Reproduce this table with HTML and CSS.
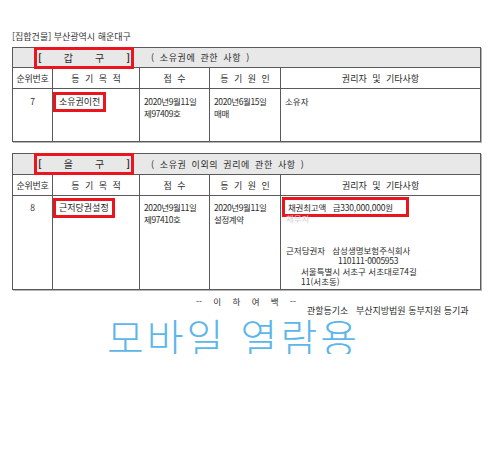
FILE: index.html
```html
<!DOCTYPE html>
<html lang="ko">
<head>
<meta charset="utf-8">
<title>등기부등본</title>
<link rel="stylesheet" href="styles.css">
</head>
<body>
<div class="page">
  <div class="title">[집합건물] 부산광역시 해운대구</div>

  <table class="reg">
    <colgroup><col class="c1"><col class="c2"><col class="c3"><col class="c4"><col class="c5"></colgroup>
    <tr class="sec">
      <td colspan="5">
        <div class="sec-inner">
          <span class="sec-label mark"><b>[</b><span>갑</span><span>구</span><b>]</b></span>
          <span class="sec-desc">( 소유권에 관한 사항 )</span>
        </div>
      </td>
    </tr>
    <tr class="hd">
      <th>순위번호</th><th>등 기 목 적</th><th>접 수</th><th>등 기 원 인</th><th>권리자 및 기타사항</th>
    </tr>
    <tr class="body b1">
      <td class="num">7</td>
      <td><span class="mark small">소유권이전</span></td>
      <td class="date">2020년9월11일<br>제97409호</td>
      <td class="date">2020년6월15일<br>매매</td>
      <td>소유자</td>
    </tr>
  </table>

  <table class="reg second">
    <colgroup><col class="c1"><col class="c2"><col class="c3"><col class="c4"><col class="c5"></colgroup>
    <tr class="sec">
      <td colspan="5">
        <div class="sec-inner">
          <span class="sec-label mark"><b>[</b><span>을</span><span>구</span><b>]</b></span>
          <span class="sec-desc">( 소유권 이외의 권리에 관한 사항 )</span>
        </div>
      </td>
    </tr>
    <tr class="hd">
      <th>순위번호</th><th>등 기 목 적</th><th>접 수</th><th>등 기 원 인</th><th>권리자 및 기타사항</th>
    </tr>
    <tr class="body b2">
      <td class="num">8</td>
      <td><span class="mark small">근저당권설정</span></td>
      <td class="date">2020년9월11일<br>제97410호</td>
      <td class="date">2020년9월11일<br>설정계약</td>
      <td class="rights">
        <div class="line"><span class="mark wide">채권최고액&nbsp;&nbsp;&nbsp;금330,000,000원</span></div>
        <div class="line faint">채무자</div>
        <div class="line"></div>
        <div class="line"></div>
        <div class="line">근저당권자&nbsp;&nbsp;&nbsp;삼성생명보험주식회사</div>
        <div class="line ind2">110111-0005953</div>
        <div class="line ind1">서울특별시 서초구 서초대로74길</div>
        <div class="line ind1">11(서초동)</div>
      </td>
    </tr>
  </table>

  <div class="end-mark"><span>--</span><span>이</span><span>하</span><span>여</span><span>백</span><span>--</span></div>
  <div class="office">관할등기소&nbsp;&nbsp;&nbsp;부산지방법원 동부지원 등기과</div>
  <div class="watermark">모바일 열람용</div>
</div>
</body>
</html>
```

FILE: styles.css
```css
html, body {
  margin: 0;
  padding: 0;
  background: #ffffff;
}

body {
  font-family: "Noto Sans CJK KR", "Noto Sans", sans-serif;
  color: #2b2b2b;
}

.page {
  padding: 31px 22px 0 12px;
}

.title {
  font-size: 9px;
  line-height: 12px;
  height: 16px;
  color: #333;
}

.reg {
  width: 468px;
  border-collapse: collapse;
  table-layout: fixed;
  border: 1px solid #4a4a4a;
  box-shadow: 1px 1px 0 #b5b5b5;
}

.reg.second {
  margin-top: 11px;
}

.c1 { width: 40px; }
.c2 { width: 87px; }
.c3 { width: 70px; }
.c4 { width: 71px; }
.c5 { width: 200px; }

.reg td, .reg th {
  border: 1px solid #5a5a5a;
  padding: 0;
}

.sec td {
  height: 19px;
  background: #e8e8e8;
}

.second .sec td {
  height: 20px;
}

.sec-inner {
  display: flex;
  align-items: center;
}

.sec-label {
  display: inline-flex;
  justify-content: space-between;
  align-items: center;
  width: 92px;
  height: 14px;
  margin-left: 25px;
  font-size: 10px;
  line-height: 14px;
}

.sec-label b {
  font-weight: 700;
}

.sec-label span {
  font-weight: 400;
}

.sec-desc {
  margin-left: 21px;
  font-size: 9px;
  letter-spacing: 0.6px;
  word-spacing: 2px;
}

.mark {
  outline: 3px solid #e9151f;
  outline-offset: 1px;
}

.hd th {
  height: 20px;
  font-weight: 400;
  font-size: 9px;
  text-align: center;
  word-spacing: 3px;
}

.hd th:first-child {
  word-spacing: 0;
  letter-spacing: -0.3px;
}

.body td {
  vertical-align: top;
  font-size: 8.5px;
  line-height: 12px;
  padding: 6px 4px 0 4px;
}

.b1 td {
  height: 46px;
}

.b2 td {
  height: 88px;
  padding-top: 5px;
}

.num {
  text-align: center;
}

.small {
  display: inline-block;
  padding: 0 2px;
  font-size: 9px;
  line-height: 12px;
  font-weight: 400;
  color: #1e1e1e;
}

.date {
  letter-spacing: -0.4px;
  font-size: 8.5px;
}

.b2 td.rights {
  padding-left: 5px;
}

.rights .line {
  height: 10.5px;
  line-height: 10.5px;
  white-space: nowrap;
}

.rights .line:first-child {
  height: 12px;
  line-height: 12px;
}

.wide {
  display: inline-block;
  padding: 0 12px 0 2px;
  letter-spacing: -0.2px;
}

.faint {
  color: #d2d2d2;
}

.ind1 {
  padding-left: 15px;
}

.ind2 {
  padding-left: 52px;
  letter-spacing: -0.3px;
}

.end-mark {
  display: flex;
  justify-content: space-between;
  width: 100px;
  margin-left: 184px;
  margin-top: 6px;
  font-size: 8.5px;
  line-height: 10px;
}

.office {
  margin-left: 295px;
  font-size: 9px;
  line-height: 10px;
  white-space: nowrap;
}

.watermark {
  margin-left: 95px;
  margin-top: 2px;
  font-size: 40px;
  line-height: 36px;
  letter-spacing: 3px;
  color: #5cb6ea;
  font-weight: 300;
  white-space: nowrap;
}
```
